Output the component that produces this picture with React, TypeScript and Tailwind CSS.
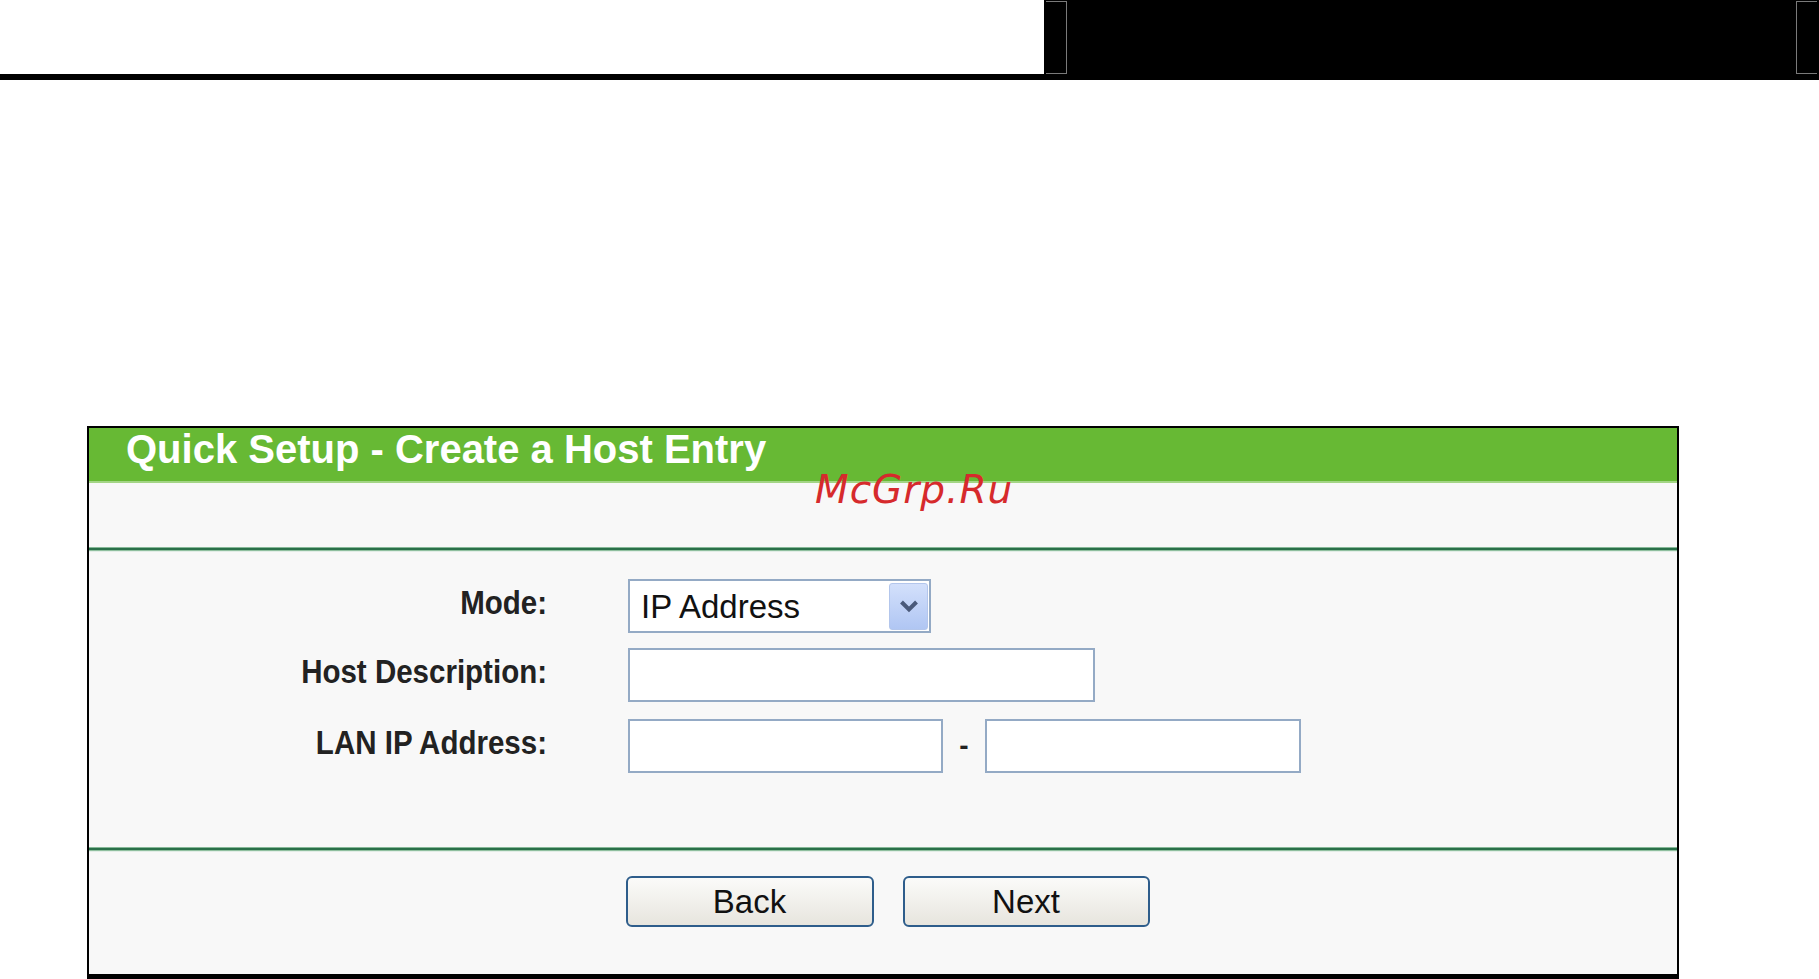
import React from "react";

function Separator() {
  return (
    <div className="flex flex-col">
      <div className="h-[1px] bg-[#86b897]" />
      <div className="h-[2px] bg-[#2a7049]" />
      <div className="h-[1px] bg-[#8fbf9f]" />
      <div className="h-[1px] bg-[#e3eee7]" />
    </div>
  );
}

function Label({ children }: { children: React.ReactNode }) {
  return (
    <div className="flex h-[54px] items-center justify-end pb-[7px]">
      <span className="scale-y-110 text-[29.5px] font-bold leading-[29px] text-[#222222]">{children}</span>
    </div>
  );
}

function TextBox({ w }: { w: string }) {
  return <div className={`h-[54px] border-2 border-[#94aac5] bg-white ${w}`} />;
}

function Btn({ label, w }: { label: string; w: string }) {
  return (
    <div
      className={`flex h-[51px] items-center justify-center rounded-[6px] border-2 border-[#2e5d8b] bg-gradient-to-b from-[#fbfbf9] to-[#e7e5de] text-[33px] leading-[33px] text-[#111111] ${w}`}
    >
      {label}
    </div>
  );
}

export default function App() {
  return (
    <div className="relative h-[979px] w-[1819px] overflow-hidden bg-white font-['Liberation_Sans',Arial,sans-serif]">
      {/* top bar */}
      <div className="flex h-[74px]">
        <div className="flex-1 bg-white" />
        <div className="flex w-[775px] justify-between bg-black px-[2px] pt-[1px]">
          <div className="h-[73px] w-[21px] border-y border-r border-[#7a7a7a]" />
          <div className="h-[73px] w-[21px] border-y border-l border-[#7a7a7a]" />
        </div>
      </div>
      <div className="h-[6px] bg-black" />

      {/* panel */}
      <div className="ml-[87px] mt-[346px] flex h-[553px] w-[1592px] flex-col border-2 border-b-[5px] border-black bg-[#f8f8f8]">
        <div className="h-[53px] bg-[#67b934] pl-[37px] pt-[1px]">
          <span className="text-[40px] font-bold leading-[40px] text-white">
            Quick Setup - Create a Host Entry
          </span>
        </div>
        <div className="h-[2px] bg-[#a3d585]" />
        <div className="h-[64px]" />
        <Separator />

        <div className="grid h-[295px] grid-cols-[458px_1fr] content-start gap-x-[81px] pt-[27px]">
          <Label>Mode:</Label>
          <div className="flex h-[54px] w-[303px] items-center justify-between border-2 border-[#94aac5] bg-white pl-[11px] pr-[1px]">
            <span className="text-[33px] leading-[33px] text-[#111111]">IP Address</span>
            <div className="flex h-[47px] w-[39px] items-center justify-center rounded-[3px] border border-[#b3c6ec] bg-gradient-to-b from-[#d3e0fb] to-[#b0c6f3]">
              <svg width="20" height="14" viewBox="0 0 20 14">
                <path d="M2.5 3 L10 10.5 L17.5 3" fill="none" stroke="#4a5a7a" strokeWidth="4" />
              </svg>
            </div>
          </div>

          <div className="mt-[15px]">
            <Label>Host Description:</Label>
          </div>
          <div className="mt-[15px]">
            <TextBox w="w-[467px]" />
          </div>

          <div className="mt-[17px]">
            <Label>LAN IP Address:</Label>
          </div>
          <div className="mt-[17px] flex items-center">
            <TextBox w="w-[315px]" />
            <div className="flex w-[42px] justify-center text-[28px] font-bold leading-[28px] text-[#222222]">-</div>
            <TextBox w="w-[316px]" />
          </div>
        </div>

        <Separator />
        <div className="flex flex-1 justify-center gap-[29px] pl-[9px] pt-[24px]">
          <Btn label="Back" w="w-[248px]" />
          <Btn label="Next" w="w-[247px]" />
        </div>
      </div>

      {/* watermark */}
      <div className="absolute left-[815px] top-[470px] font-['DejaVu_Sans',sans-serif] text-[39px] italic leading-[39px] tracking-[1px] text-[#d62a2c]">
        McGrp.Ru
      </div>
    </div>
  );
}
